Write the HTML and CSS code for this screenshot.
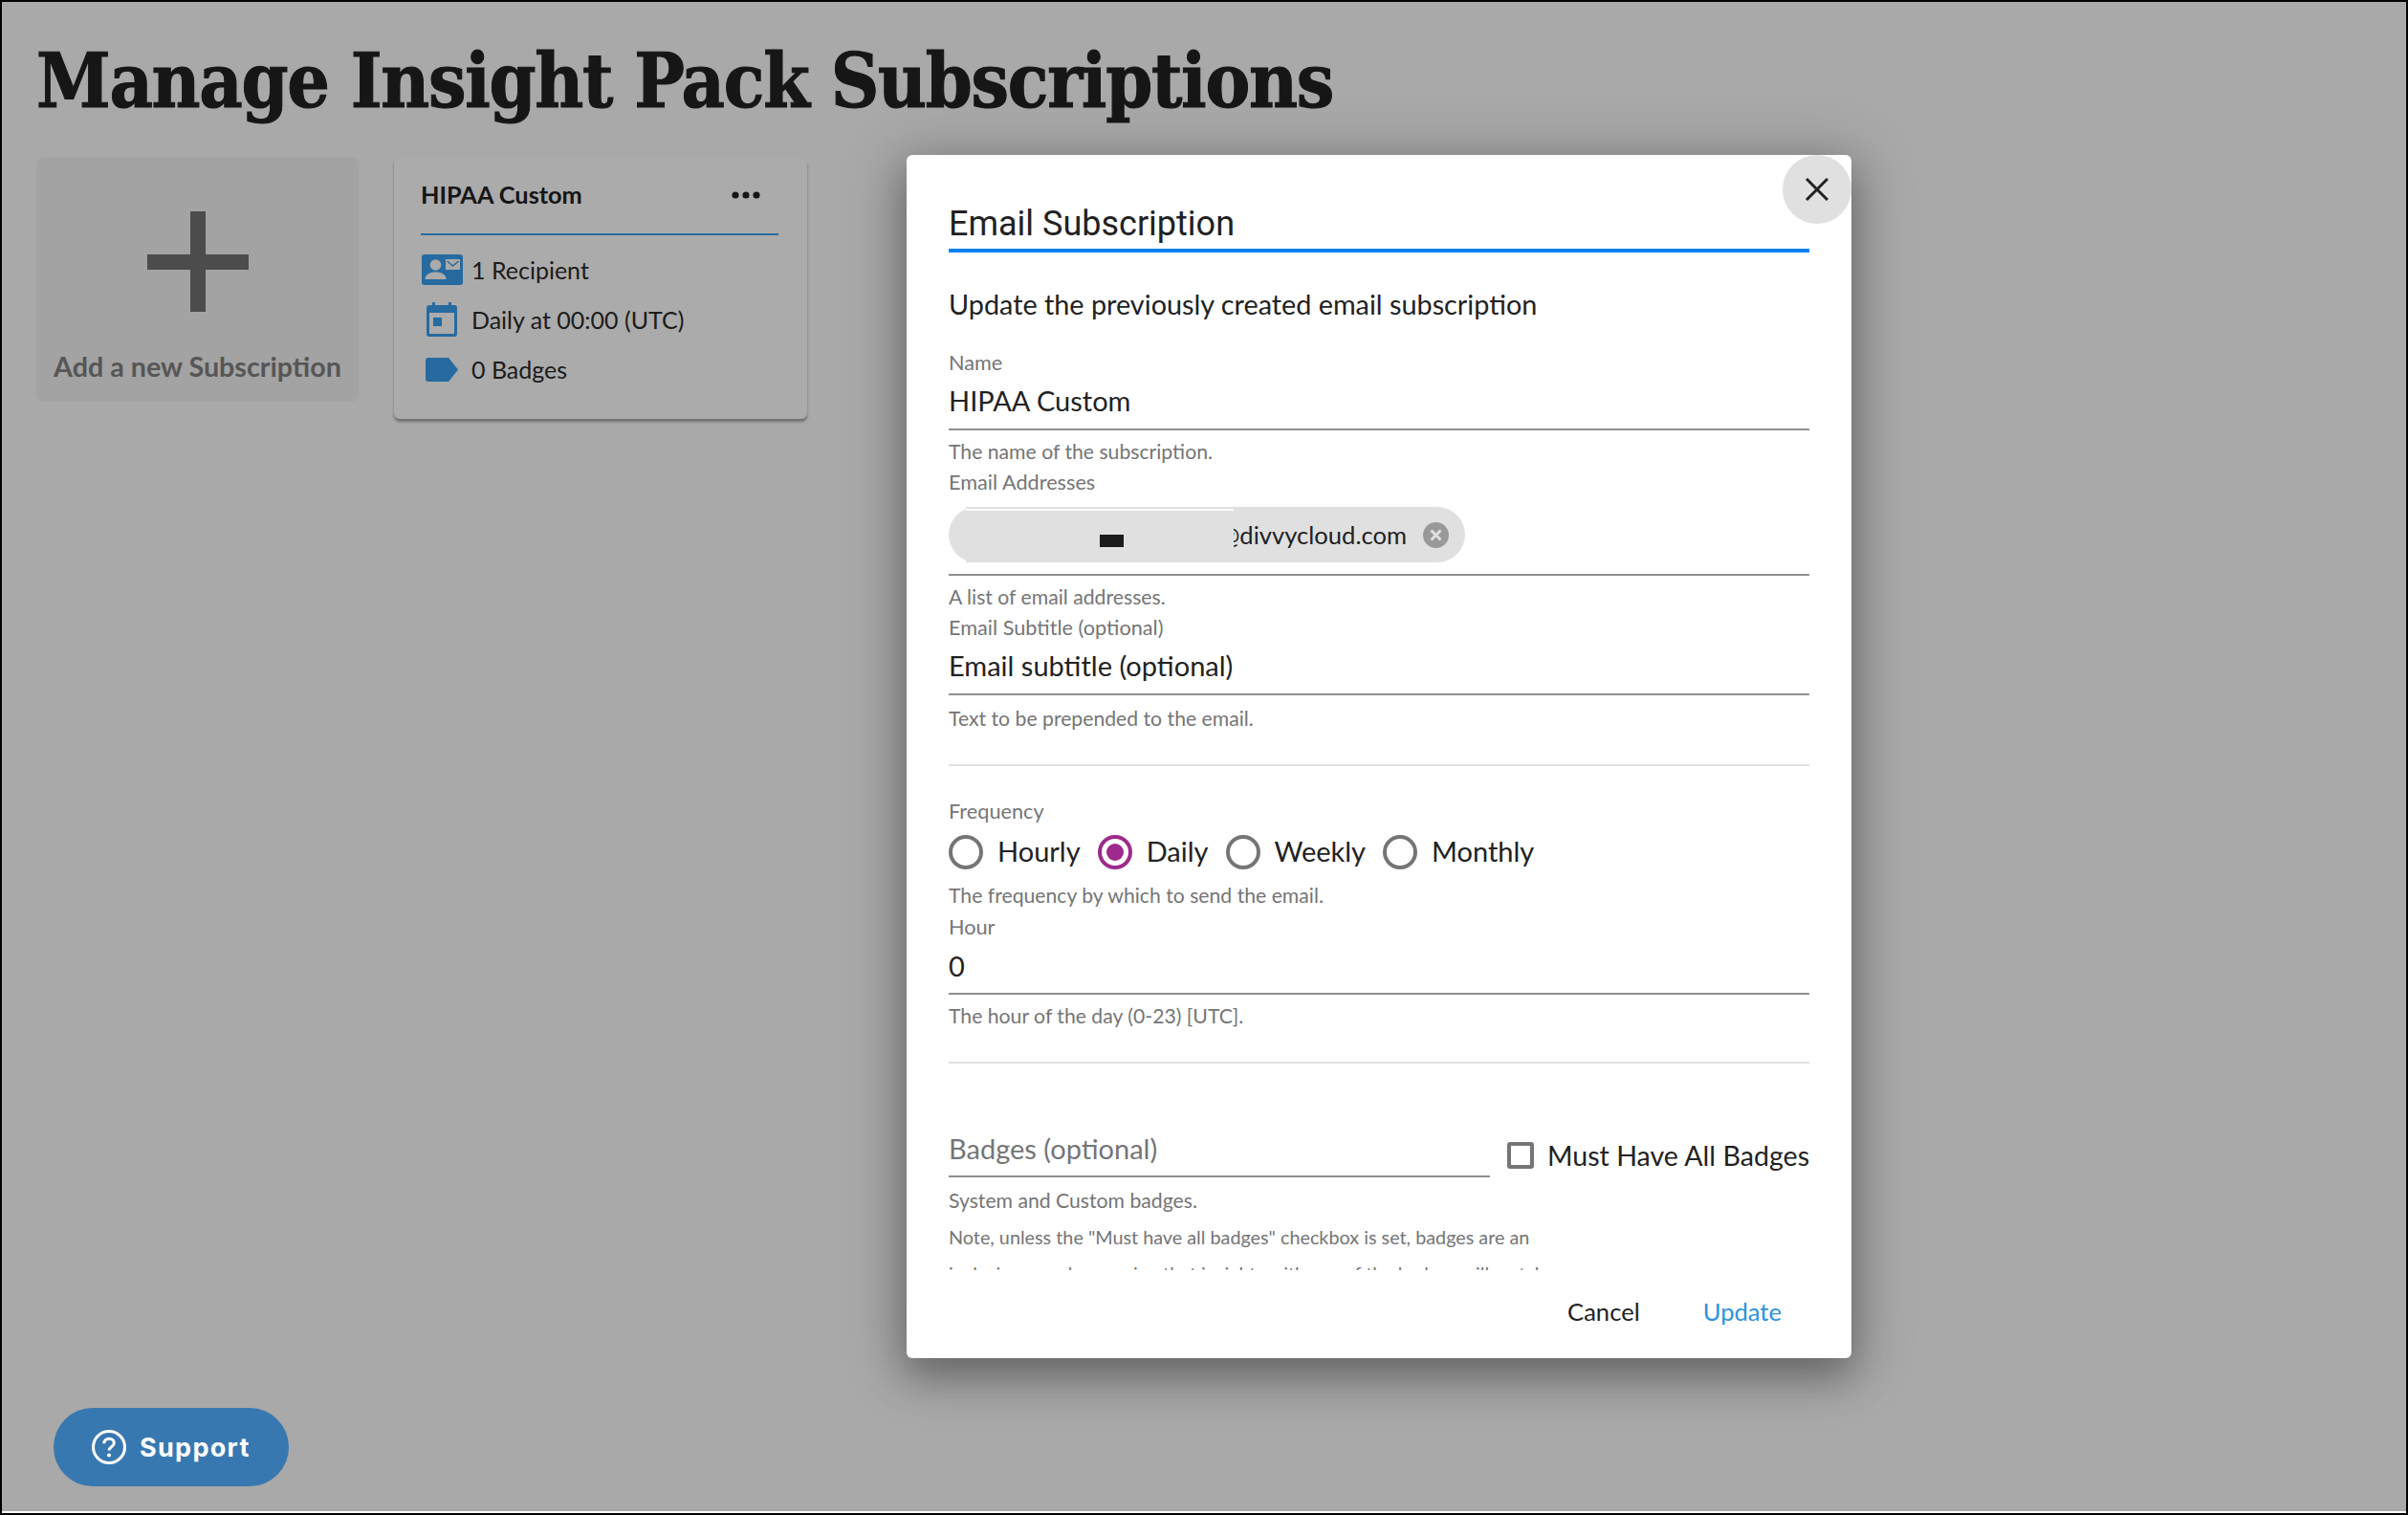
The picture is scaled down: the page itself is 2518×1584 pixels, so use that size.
FILE: index.html
```html
<!DOCTYPE html>
<html lang="en">
<head>
<meta charset="utf-8">
<title>Manage Insight Pack Subscriptions</title>
<link rel="stylesheet" href="styles.css">
</head>
<body>
<div class="frame">
  <main class="page">
    <h1 class="page-title">Manage Insight Pack Subscriptions</h1>
    <div class="cards">
      <section class="add-card">
        <svg class="plus" viewBox="0 0 106 105" width="106" height="105"><path d="M45 0h16v45h45v16H61v44H45V61H0V45h45z"/></svg>
        <div class="add-label">Add a new Subscription</div>
      </section>
      <section class="sub-card">
        <header class="sub-head">
          <span class="sub-name">HIPAA Custom</span>
          <svg class="dots" viewBox="0 0 30 8" width="30" height="8"><circle cx="4" cy="4" r="3.600"/><circle cx="15" cy="4" r="3.600"/><circle cx="26" cy="4" r="3.600"/></svg>
        </header>
        <div class="sub-row">
          <span class="sub-icon"><svg viewBox="0 0 43 32" width="43" height="32"><rect width="43" height="32" rx="3" fill="#3a9fef"/><circle cx="14.500" cy="11" r="5.800" fill="#fff"/><path d="M3.500 26c0-5 5-7.500 11-7.500s11 2.500 11 7.500z" fill="#fff"/><rect x="25" y="5" width="15" height="11" fill="#fff"/><path d="M26.500 7l6 5 6-5" fill="none" stroke="#3a9fef" stroke-width="1.500"/></svg></span>
          <span>1 Recipient</span>
        </div>
        <div class="sub-row">
          <span class="sub-icon"><svg viewBox="0 0 32 36" width="32" height="36"><path d="M6 0h3v3h14V0h3v3h3a3 3 0 0 1 3 3v27a3 3 0 0 1-3 3H3a3 3 0 0 1-3-3V6a3 3 0 0 1 3-3h3z" fill="#3a9fef"/><rect x="3" y="11" width="26" height="22" fill="#fff"/><rect x="7" y="16" width="9" height="9" fill="#3a9fef"/></svg></span>
          <span>Daily at 00:00 (UTC)</span>
        </div>
        <div class="sub-row">
          <span class="sub-icon"><svg viewBox="0 0 34 25" width="34" height="25"><path d="M3 0h21l10 12.500L24 25H3a3 3 0 0 1-3-3V3a3 3 0 0 1 3-3z" fill="#3a9fef"/></svg></span>
          <span>0 Badges</span>
        </div>
      </section>
    </div>
  </main>

  <div class="backdrop"></div>

  <div class="dialog" role="dialog">
    <button class="close" type="button" aria-label="Close"><svg viewBox="0 0 24 24" width="24" height="24"><path d="M1 1l22 22M23 1L1 23" stroke="#222" stroke-width="3" fill="none"/></svg></button>
    <header class="dialog-head"><h2 class="dialog-title">Email Subscription</h2></header>
    <div class="dialog-body">
      <p class="intro">Update the previously created email subscription</p>

      <div class="field">
        <div class="label">Name</div>
        <div class="control">HIPAA Custom</div>
        <div class="helper">The name of the subscription.</div>
      </div>

      <div class="field">
        <div class="label">Email Addresses</div>
        <div class="control chip-control">
          <div class="chip">
            <span class="chip-text">redacted@divvycloud.com</span>
            <svg class="chip-x" viewBox="0 0 27 27" width="27" height="27"><circle cx="13.500" cy="13.500" r="13.500" fill="#999"/><path d="M8.500 8.500l10 10M18.500 8.500l-10 10" stroke="#e0e0e0" stroke-width="3"/></svg>
            <span class="redact"><span class="redact-line"></span><span class="redact-mark"></span></span>
          </div>
        </div>
        <div class="helper">A list of email addresses.</div>
      </div>

      <div class="field">
        <div class="label">Email Subtitle (optional)</div>
        <div class="control">Email subtitle (optional)</div>
        <div class="helper helper-low">Text to be prepended to the email.</div>
      </div>

      <hr class="rule rule-a">

      <div class="label">Frequency</div>
      <div class="radios">
        <label class="radio"><span class="dot"></span>Hourly</label>
        <label class="radio"><span class="dot dot-on"></span>Daily</label>
        <label class="radio"><span class="dot"></span>Weekly</label>
        <label class="radio"><span class="dot"></span>Monthly</label>
      </div>
      <div class="helper helper-radio">The frequency by which to send the email.</div>

      <div class="field">
        <div class="label">Hour</div>
        <div class="control control-hour">0</div>
        <div class="helper">The hour of the day (0-23) [UTC].</div>
      </div>

      <hr class="rule rule-b">

      <div class="badge-row">
        <div class="control badge-input">Badges (optional)</div>
        <label class="check"><span class="box"></span>Must Have All Badges</label>
      </div>
      <div class="helper helper-badges">System and Custom badges.</div>
      <div class="helper note">Note, unless the "Must have all badges" checkbox is set, badges are an</div>
      <div class="helper note">inclusive search, meaning that insights with any of the badges will match.</div>
    </div>
    <footer class="dialog-foot">
      <button class="action" type="button">Cancel</button>
      <button class="action action-primary" type="button">Update</button>
    </footer>
  </div>

  <button class="support" type="button">
    <svg viewBox="0 0 36 36" width="36" height="36"><circle cx="18" cy="18" r="16.500" fill="none" stroke="#fff" stroke-width="3"/><path d="M12.800 14.200c0-3 2.300-5 5.300-5s5.200 1.900 5.200 4.600c0 4-5.300 3.900-5.300 7.700" fill="none" stroke="#fff" stroke-width="3"/><circle cx="18" cy="26.500" r="2" fill="#fff"/></svg>
    <span>Support</span>
  </button>
</div>
</body>
</html>
```
FILE: styles.css
```css
* { box-sizing: border-box; }
html, body { margin: 0; padding: 0; }
body { font-family: "Lato", "Liberation Sans", sans-serif; color: #222; }

.frame {
  position: relative;
  width: 2518px;
  height: 1584px;
  overflow: hidden;
  background: #000;
  padding: 2px 2px 2px 2px;
}
.page {
  height: 1580px;
  background: #fdfdfd;
  padding: 0 36px;
  border-bottom: 2px solid #fff;
}
.backdrop { position: absolute; left: 2px; right: 2px; top: 2px; height: 1578px; background: rgba(0,0,0,.33); }
.page-title {
  margin: 0;
  padding-top: 38px;
  height: 162px;
  font-family: "DejaVu Serif Condensed", "DejaVu Serif", serif;
  font-weight: 700;
  font-size: 78px;
  line-height: 90px;
  letter-spacing: -1.3px;
  -webkit-text-stroke: 1px #222;
  color: #222;
  white-space: nowrap;
}
.cards { display: flex; align-items: flex-start; gap: 37px; }

.add-card {
  width: 337px;
  height: 256px;
  background: #f4f4f4;
  border-radius: 8px;
  display: flex;
  flex-direction: column;
  align-items: center;
  padding-top: 57px;
}
.plus { fill: #727272; display: block; }
.add-label {
  margin-top: 39px;
  font-size: 28.7px;
  line-height: 36px;
  font-weight: 700;
  color: #818181;
  white-space: nowrap;
}

.sub-card {
  width: 432px;
  height: 274px;
  background: #fff;
  border-radius: 6px;
  padding: 0 30px 0 28px;
  box-shadow: 0 3px 3px rgba(0,0,0,.35);
}
.sub-head {
  height: 82px;
  border-bottom: 2px solid #3ea0ec;
  display: flex;
  justify-content: space-between;
  align-items: flex-start;
  padding: 23px 19px 0 0;
}
.sub-name { font-size: 25.3px; line-height: 32px; font-weight: 700; color: #222; }
.dots { fill: #222; margin-top: 13px; }
.sub-row {
  display: flex;
  align-items: center;
  height: 52px;
  font-size: 25px;
  color: #2b2b2b;
  white-space: nowrap;
}
.sub-head + .sub-row { margin-top: 10px; }
.sub-icon { width: 53px; padding-right: 9px; display: flex; justify-content: center; }
.sub-icon svg { display: block; }

.dialog {
  position: absolute;
  left: 948px;
  top: 162px;
  width: 988px;
  height: 1258px;
  background: #fff;
  border-radius: 6px;
  box-shadow: 0 18px 42px 2px rgba(0,0,0,.3), 0 6px 64px 10px rgba(0,0,0,.16);
}
.close {
  position: absolute;
  top: 0;
  right: 0;
  width: 72px;
  height: 72px;
  border: 0;
  padding: 0;
  border-radius: 50%;
  background: #e0e0e0;
  display: flex;
  align-items: center;
  justify-content: center;
}
.dialog-head { margin: 0 44px; height: 102px; border-bottom: 4px solid #0a7ff0; padding-top: 49px; }
.dialog-title { margin: 0; font-family: "Roboto", sans-serif; font-weight: 400; font-size: 36px; line-height: 46px; color: #212121; }
.dialog-body { height: 1064px; overflow: hidden; padding: 36px 44px 0; }
.intro { margin: 0 0 31px; font-size: 28.8px; line-height: 36px; color: #222; }

.field { margin: 0; }
.label { font-size: 21.7px; line-height: 24px; color: #757575; }
.control {
  height: 59px;
  border-bottom: 2px solid #8f8f8f;
  font-size: 29px;
  line-height: 56px;
  color: #222;
}
.control-hour { line-height: 58px; }
.helper { margin: 10px 0 8px; font-size: 21.2px; line-height: 24px; color: #757575; white-space: nowrap; }
.helper-low { margin-top: 12px; }
.helper-radio { margin: 15px 0 9px; }
.helper-badges { margin-top: 12px; }

.chip-control { height: 86px; padding-top: 14px; line-height: normal; }
.chip {
  position: relative;
  width: 540px;
  height: 58px;
  border-radius: 29px;
  background: #e0e0e0;
  display: flex;
  align-items: center;
  justify-content: flex-end;
  padding-right: 17px;
  font-size: 25.6px;
  color: #222;
}
.chip-text { margin-right: 17px; }
.chip-x { display: block; }
.redact { position: absolute; left: 18px; top: 0; width: 280px; height: 58px; background: #e0e0e0; }
.redact-line { position: absolute; left: 0; right: 0; top: 2px; height: 2px; background: #fff; }
.redact-mark { position: absolute; left: 140px; top: 29px; width: 25px; height: 13px; background: #1c1c1c; }

.rule { margin: 0; border: 0; height: 2px; background: #e0e0e0; }
.rule-a { margin-top: 36px; margin-bottom: 35px; }
.rule-b { margin-top: 36px; }

.radios { display: flex; height: 36px; margin-top: 13px; gap: 18px; }
.radio { display: flex; align-items: flex-start; gap: 15px; font-size: 29px; line-height: 33px; color: #222; }
.dot { width: 36px; height: 36px; border: 4px solid #757575; border-radius: 50%; display: block; }
.dot-on { border-color: #9d2a8c; position: relative; }
.dot-on::after { content: ""; position: absolute; inset: 5px; border-radius: 50%; background: #9d2a8c; }

.badge-row { display: flex; align-items: flex-start; margin-top: 60px; gap: 18px; }
.badge-input { flex: 0 0 566px; color: #757575; line-height: 58px; }
.check { display: flex; align-items: center; gap: 14px; margin-top: 19px; font-size: 28.6px; color: #222; white-space: nowrap; }
.box { width: 28px; height: 28px; border: 4px solid #757575; border-radius: 3px; display: block; }
.note { margin: 14px 0 0; font-size: 19.8px; }

.dialog-foot { display: flex; justify-content: flex-end; align-items: center; height: 92px; padding: 0 73px 6px 0; gap: 66px; }
.action { border: 0; background: none; padding: 0; font-family: "Lato", sans-serif; font-size: 25.6px; color: #222; }
.action-primary { color: #2b93dd; }

.support {
  position: absolute;
  left: 56px;
  top: 1472px;
  width: 246px;
  height: 82px;
  border: 0;
  border-radius: 41px;
  background: #3878b0;
  color: #fff;
  font-family: "Inter", sans-serif;
  font-weight: 700;
  font-size: 27px;
  letter-spacing: 1.3px;
  display: flex;
  align-items: center;
  gap: 14px;
  padding: 0 0 0 40px;
}
```
